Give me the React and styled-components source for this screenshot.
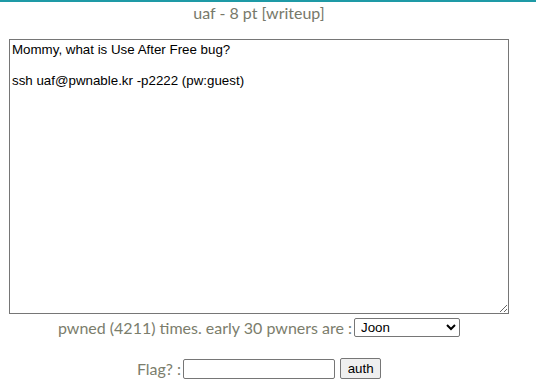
import React from 'react';
import styled, { createGlobalStyle } from 'styled-components';

const GlobalStyle = createGlobalStyle`
  html, body {
    margin: 0;
    padding: 0;
    background: #fff;
  }
  body {
    font-family: Lato, "Open Sans", sans-serif;
  }
`;

const Page = styled.div`
  width: 536px;
  height: 384px;
  overflow: hidden;
  border-top: 2px solid #1e9aa6;
  box-sizing: border-box;
`;

const Content = styled.div`
  width: 518px;
  display: flex;
  flex-direction: column;
  align-items: center;
`;

const Title = styled.div`
  font-family: Lato, sans-serif;
  font-size: 16px;
  line-height: 20px;
  color: #77796a;
  margin-top: 1px;
  height: 36px;
`;

const Description = styled.textarea`
  display: block;
  width: 500px;
  height: 275px;
  box-sizing: border-box;
  border: 1px solid #767676;
  border-radius: 0;
  padding: 2px 2px;
  font-family: "Liberation Sans", Arial, sans-serif;
  font-size: 13.33px;
  line-height: 15.5px;
  color: #000;
  resize: both;
  outline: none;
`;

const Row = styled.div`
  display: flex;
  align-items: center;
  justify-content: center;
  margin-top: ${p => p.$gap}px;
  font-family: Lato, sans-serif;
  font-size: 16px;
  color: #7b7d6c;
`;

const Picker = styled.select`
  width: 106px;
  height: 19px;
  margin-left: 2px;
  font-family: "Liberation Sans", Arial, sans-serif;
  font-size: 13.33px;
  color: #000;
  border: 1px solid #767676;
  border-radius: 2px;
  background: #fff;
  padding: 0 0 0 2px;
`;

const FlagInput = styled.input`
  width: 152px;
  height: 20px;
  box-sizing: border-box;
  border: 1px solid #767676;
  border-radius: 2px;
  margin: 0 5px 0 2px;
  padding: 1px 2px;
  font-size: 13.33px;
`;

const AuthButton = styled.button`
  height: 21px;
  width: 41px;
  padding: 0;
  font-family: "Liberation Sans", Arial, sans-serif;
  font-size: 13.33px;
  color: #000;
  background: #efefef;
  border: 1px solid #767676;
  border-radius: 2px;
`;

const text = 'Mommy, what is Use After Free bug?\n\nssh uaf@pwnable.kr -p2222 (pw:guest)\n';

export default function App() {
  return (
    <Page>
      <GlobalStyle />
      <Content>
        <Title>uaf - 8 pt [writeup]</Title>
        <Description defaultValue={text} readOnly />
        <Row $gap={4}>
          pwned (4211) times. early 30 pwners are :
          <Picker defaultValue="Joon">
            <option>Joon</option>
          </Picker>
        </Row>
        <Row $gap={21}>
          Flag? :
          <FlagInput type="text" />
          <AuthButton>auth</AuthButton>
        </Row>
      </Content>
    </Page>
  );
}
